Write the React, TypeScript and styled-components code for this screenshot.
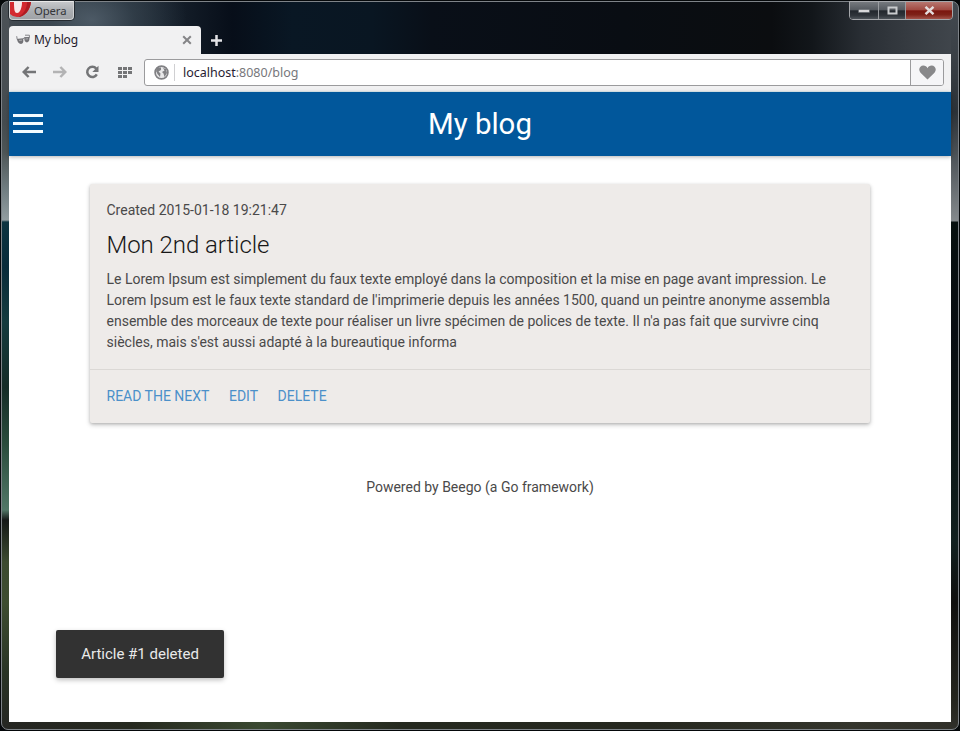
import React from "react";
import styled, { createGlobalStyle, css } from "styled-components";

const GlobalStyle = createGlobalStyle`
  * { box-sizing: border-box; }
  html, body { margin: 0; padding: 0; }
  body { background: #05080a; font-family: Roboto, "Liberation Sans", sans-serif; }
  button { margin: 0; padding: 0; border: 0; background: none; font: inherit; color: inherit; }
`;

const Desktop = styled.div`
  height: 731px;
  width: 960px;
  padding: 1px;
  overflow: hidden;
`;

const Window = styled.div`
  width: 958px;
  height: 729px;
  border: 1px solid #7e8388;
  border-radius: 7px;
  padding: 0 7px 7px;
  display: flex;
  flex-direction: column;
  background:
    linear-gradient(180deg, #434950 0, #3a4046 55px, #2c3238 110px, #4a5055 150px, #84898c 219px, #07100f 220px, #080d12 330px, #0c1716 440px, #11201f 540px, #10100f 600px, #25261f 700px, #30302b 727px) right top / 7px 727px no-repeat,
    linear-gradient(180deg, #4c5257 0, #454c50 120px, #4d5556 150px, #738084 190px, #929da0 218px, #0d3441 220px, #082b3a 265px, #153b3e 320px, #152c27 385px, #294b3b 440px, #517767 508px, #151918 518px, #3c4b30 560px, #3e4d30 600px, #293425 670px, #252622 727px) left top / 7px 727px no-repeat,
    linear-gradient(90deg, #252622 0, #26291f 130px, #3a4931 260px, #25291f 400px, #26281f 650px, #34352c 850px, #302f29 100%) left bottom / 100% 7px no-repeat,
    radial-gradient(ellipse 95px 65px at 90px 18px, rgba(85, 99, 112, 0.75) 0, rgba(58, 72, 84, 0.55) 45%, transparent 100%) left top / 958px 52px no-repeat,
    linear-gradient(90deg, #454b50 0, #38434b 75px, #17212c 165px, #070e19 230px, #091724 290px, #091622 370px, #090f18 430px, #090d13 620px, #0b0d10 770px, #12161a 810px, #292e34 860px, #373c42 910px, #41474d 100%) left top / 100% 60px no-repeat,
    #20252a;
`;

const TitleBar = styled.div`
  height: 24px;
  display: flex;
  justify-content: space-between;
  align-items: flex-start;
`;

const OperaButton = styled.button`
  width: 65px;
  height: 19px;
  margin-top: -1px;
  display: flex;
  align-items: center;
  border: 1px solid #d0d2d4;
  border-top-color: #e9e9e9;
  border-radius: 0 0 4px 4px;
  background: linear-gradient(#c5c7ca, #aaadb1 55%, #a0a3a7);
  box-shadow: 0 0 0 1px #242a30;
  font: 11.3px/16px "Noto Sans", sans-serif;
  color: #34363a;
  overflow: hidden;
  span { margin: 1px 0 0 3px; letter-spacing: -0.1px; }
`;

const WindowControls = styled.div`
  display: flex;
  width: 104px;
  height: 19px;
  margin: -1px -2px 0 0;
  border: 1px solid #a5a7ab;
  border-radius: 0 0 4px 4px;
  overflow: hidden;
`;

const WindowButton = styled.button<{ $close?: boolean; $w: number }>`
  width: ${(p) => p.$w}px;
  height: 17px;
  display: flex;
  align-items: center;
  justify-content: center;
  background: ${(p) => (p.$close
    ? "linear-gradient(#b77770 0, #a14a42 46%, #7b160f 52%, #7e2218 75%, #a3534a 100%)"
    : "linear-gradient(#75797e 0, #555a60 46%, #22272d 52%, #30353b 80%, #4e545a 100%)")};
  & + & { border-left: 1px solid #999ca0; }
`;

const TabStrip = styled.div`
  height: 28px;
  display: flex;
`;

const Tab = styled.div`
  width: 192px;
  height: 28px;
  display: flex;
  align-items: center;
  padding: 0 9px 0 7px;
  border-radius: 4px 4px 0 0;
  background: #f1f1f2;
  font: 12px/16px "Noto Sans", sans-serif;
  color: #251b2c;
`;

const TabTitle = styled.span`
  flex: 1;
  margin-left: 3px;
  letter-spacing: -0.2px;
`;

const NewTab = styled.button`
  width: 31px;
  height: 29px;
  display: flex;
  align-items: center;
  justify-content: center;
`;

const Toolbar = styled.div`
  height: 38px;
  display: flex;
  align-items: center;
  padding: 0 7px 1px 4px;
  background: #f1f1f2;
  border-bottom: 1px solid #dfedf2;
`;

const ToolButton = styled.button<{ $faded?: boolean; $w?: number }>`
  width: ${(p) => p.$w ?? 32}px;
  height: 28px;
  display: flex;
  align-items: center;
  justify-content: center;
  color: ${(p) => (p.$faded ? "#b3b3b4" : "#747577")};
`;

const AddressBar = styled.div`
  flex: 1;
  height: 27px;
  display: flex;
  align-items: center;
  margin-left: 3px;
  border: 1px solid #9b9b9d;
  border-radius: 3px;
  background: #fff;
  overflow: hidden;
`;

const SiteBadge = styled.div`
  width: 30px;
  height: 17px;
  padding-left: 9px;
  display: flex;
  align-items: center;
  border-right: 1px solid #d0d0d2;
`;

const Address = styled.div`
  flex: 1;
  padding: 1px 0 0 8px;
  font: 12.5px/18px "Noto Sans", sans-serif;
  letter-spacing: -0.01px;
  color: #77777b;
  b { font-weight: 400; color: #281c32; }
`;

const Favourite = styled.button`
  width: 33px;
  align-self: stretch;
  display: flex;
  align-items: center;
  justify-content: center;
  border-left: 1px solid #9b9b9d;
  background: #f5f5f7;
`;

const Page = styled.main`
  width: 942px;
  height: 630px;
  background: #fff;
  position: relative;
`;

const NavBar = styled.header`
  height: 64px;
  display: grid;
  grid-template-columns: 39px 1fr 39px;
  align-items: center;
  background: #01579b;
  box-shadow: 0 1px 4px rgba(0, 0, 0, 0.3);
  h1 {
    margin: 0;
    color: #fff;
    text-align: center;
    font: 400 29.4px/64px Roboto, sans-serif;
  }
`;

const MenuButton = styled.button`
  width: 30px;
  height: 19px;
  margin: -1px 0 0 4px;
  display: flex;
  flex-direction: column;
  justify-content: space-between;
  i { height: 3px; width: 30px; background: #f4fcff; }
`;

const Card = styled.article`
  width: 780px;
  height: 239px;
  margin: 28px auto 0;
  border-radius: 2px;
  background: #eeebe9;
  box-shadow: 0 2px 5px rgba(0, 0, 0, 0.2), 0 1px 3px rgba(0, 0, 0, 0.16);
`;

const bodyText = css`
  font: 400 14px/21px Roboto, sans-serif;
  color: #4a4949;
`;

const CardBody = styled.div`
  height: 185px;
  padding: 16px 16.5px 0;
`;

const Created = styled.div`
  ${bodyText}
`;

const ArticleTitle = styled.h2`
  margin: 8px 0;
  font: 300 24px/32px Roboto, sans-serif;
  letter-spacing: -0.06px;
  color: #171717;
`;

const Line = styled.p`
  ${bodyText}
  margin: 0;
  white-space: nowrap;
`;

const CardActions = styled.nav`
  height: 54px;
  display: flex;
  align-items: center;
  gap: 19.5px;
  padding: 0 16.5px 1px;
  border-top: 1px solid #dbd8d5;
  a {
    color: #4b90c9;
    text-decoration: none;
    font: 400 14px/21px Roboto, sans-serif;
  }
`;

const Footer = styled.footer`
  ${bodyText}
  margin-top: 54px;
  text-align: center;
`;

const Toast = styled.div`
  position: absolute;
  left: 47px;
  bottom: 44px;
  width: 168px;
  height: 48px;
  border-radius: 2px;
  background: #323232;
  box-shadow: 0 2px 5px rgba(0, 0, 0, 0.26);
  color: #e9e9e9;
  text-align: center;
  white-space: nowrap;
  font: 400 15px/48px Roboto, sans-serif;
`;

const OperaLogo = () => (
  <svg width="21" height="17" viewBox="0 0 21 17">
    <path d="M0 0H21C20 8 15 15 7 15Q3 15 0 12Z" fill="#d3292f" />
    <path d="M17 0H21C20 8 15 15 8 15C14 12 17 6 17 0" fill="#ae1c22" />
    <path d="M4 0H12C12 6 10 11 7 11S4 6 4 0" fill="#f7e9e9" />
  </svg>
);

const GlassesIcon = () => (
  <svg width="15" height="12" viewBox="0 0 15 12">
    <path d="M.7 2.2L1.2 5.4L7 4.8L8.6 3.6H13.4V1.2H9" fill="none" stroke="#858589" strokeWidth="1" />
    <path d="M1 5L7.2 4.8Q8 9.5 5 10Q1.5 9.6 1 5ZM8.2 3.4L13.4 3Q14 7.6 11 8.4Q8.3 8.2 8.2 3.4Z" fill="#737377" />
    <path d="M3 6.4L6 6.1M9.5 5L12 4.8" stroke="#b0b0b2" />
  </svg>
);

const CloseIcon = () => (
  <svg width="10" height="10" viewBox="0 0 10 10">
    <path d="M1.2 1.2L8.8 8.8M8.8 1.2L1.2 8.8" stroke="#858587" strokeWidth="2" />
  </svg>
);

const ArrowIcon = ({ forward = false }: { forward?: boolean }) => (
  <svg width="14" height="12" viewBox="0 0 14 12">
    <path
      d={forward ? "M0 6H12M7.4 1L12.3 6L7.4 11" : "M14 6H2M6.6 1L1.7 6L6.6 11"}
      fill="none" stroke="currentColor" strokeWidth="2.5"
    />
  </svg>
);

const ReloadIcon = () => (
  <svg width="14" height="14" viewBox="0 0 14 14">
    <path d="M11.2 3.6A5.1 5.1 0 1 0 11.8 9.4" fill="none" stroke="currentColor" strokeWidth="2.5" />
    <path d="M13.5 .8V7H7.3Z" fill="currentColor" />
  </svg>
);

const GridIcon = () => (
  <svg width="15" height="11" viewBox="0 0 15 11" fill="currentColor">
    {[0, 4, 8].map((y) => [0, 5, 10].map((x) => (
      y === 8 && x === 10 ? null : <rect key={`${x}-${y}`} x={x} y={y} width="4" height="3" />
    )))}
  </svg>
);

const GlobeIcon = () => (
  <svg width="15" height="15" viewBox="0 0 15 15">
    <circle cx="7.5" cy="7.5" r="6.4" fill="#e8e8e9" stroke="#818184" strokeWidth="1.7" />
    <path d="M3 3L7 2.5V5L4.5 6.5L6.5 8.5L6 12L3.5 9L2 6ZM9 3L12 4L13 8L10.5 12L9.5 8.5L8 7L10.5 5.5Z" fill="#818184" />
  </svg>
);

const HeartIcon = () => (
  <svg width="17" height="15" viewBox="0 0 17 15">
    <path d="M8.5 14.5L1.5 7.8C-1.4 4.2 1.2.5 4.3.5C6.3.5 7.8 1.4 8.5 3.2C9.2 1.4 10.7.5 12.7.5C15.8.5 18.4 4.2 15.5 7.8Z" fill="#88888a" />
  </svg>
);

const articleLines = [
  "Le Lorem Ipsum est simplement du faux texte employé dans la composition et la mise en page avant impression. Le",
  "Lorem Ipsum est le faux texte standard de l'imprimerie depuis les années 1500, quand un peintre anonyme assembla",
  "ensemble des morceaux de texte pour réaliser un livre spécimen de polices de texte. Il n'a pas fait que survivre cinq",
  "siècles, mais s'est aussi adapté à la bureautique informa",
];

export default function App() {
  return (
    <Desktop>
      <GlobalStyle />
      <Window>
        <TitleBar>
          <OperaButton><OperaLogo /><span>Opera</span></OperaButton>
          <WindowControls>
            <WindowButton $w={28} aria-label="Minimize">
              <svg width="12" height="5" viewBox="0 0 12 5"><rect x=".5" y="1.5" width="11" height="3" fill="#d8d8da" stroke="#555a60" strokeWidth=".5" /></svg>
            </WindowButton>
            <WindowButton $w={27} aria-label="Maximize">
              <svg width="11" height="9" viewBox="0 0 11 9"><rect x="1.5" y="1.5" width="8" height="6" fill="none" stroke="#c9cbce" strokeWidth="2" /></svg>
            </WindowButton>
            <WindowButton $w={47} $close aria-label="Close">
              <svg width="11" height="9" viewBox="0 0 11 9"><path d="M1.5 .8L9.5 8.2M9.5 .8L1.5 8.2" stroke="#e4dddd" strokeWidth="2.4" /></svg>
            </WindowButton>
          </WindowControls>
        </TitleBar>
        <TabStrip>
          <Tab><GlassesIcon /><TabTitle>My blog</TabTitle><CloseIcon /></Tab>
          <NewTab aria-label="New tab">
            <svg width="11" height="11" viewBox="0 0 11 11"><path d="M5.5 0V11M0 5.5H11" stroke="#e3e3e6" strokeWidth="2.5" /></svg>
          </NewTab>
        </TabStrip>
        <Toolbar>
          <ToolButton aria-label="Back"><ArrowIcon /></ToolButton>
          <ToolButton $faded $w={30} aria-label="Forward"><ArrowIcon forward /></ToolButton>
          <ToolButton $w={34} aria-label="Reload"><ReloadIcon /></ToolButton>
          <ToolButton aria-label="Speed dial"><GridIcon /></ToolButton>
          <AddressBar>
            <SiteBadge><GlobeIcon /></SiteBadge>
            <Address><b>localhost</b>:8080/blog</Address>
            <Favourite aria-label="Bookmark"><HeartIcon /></Favourite>
          </AddressBar>
        </Toolbar>
        <Page>
          <NavBar>
            <MenuButton aria-label="Menu"><i /><i /><i /></MenuButton>
            <h1>My blog</h1>
          </NavBar>
          <Card>
            <CardBody>
              <Created>Created 2015-01-18 19:21:47</Created>
              <ArticleTitle>Mon 2nd article</ArticleTitle>
              {articleLines.map((line) => <Line key={line}>{line}</Line>)}
            </CardBody>
            <CardActions>
              <a>READ THE NEXT</a>
              <a>EDIT</a>
              <a>DELETE</a>
            </CardActions>
          </Card>
          <Footer>Powered by Beego (a Go framework)</Footer>
          <Toast>Article #1 deleted</Toast>
        </Page>
      </Window>
    </Desktop>
  );
}
